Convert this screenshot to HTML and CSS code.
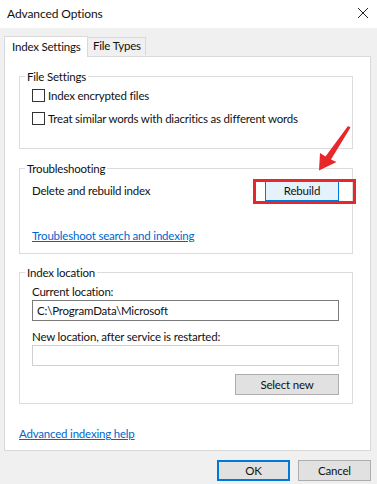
FILE: index.html
```html
<!DOCTYPE html>
<html>
<head>
<meta charset="utf-8">
<link rel="stylesheet" href="styles.css">
</head>
<body>
<div class="window">
  <div class="titlebar">
    <span class="title">Advanced Options</span>
    <svg class="close" width="12" height="12" viewBox="0 0 12 12"><path d="M1 1L11 11M11 1L1 11" stroke="#222" stroke-width="1" fill="none"/></svg>
  </div>
  <div class="tabstrip">
    <div class="tab active">Index Settings</div>
    <div class="tab">File Types</div>
  </div>
  <div class="panel">
    <div class="group g1">
      <div class="group-title">File Settings</div>
      <label class="check first"><span class="box"></span>Index encrypted files</label>
      <label class="check second"><span class="box"></span>Treat similar words with diacritics as different words</label>
    </div>
    <div class="group g2">
      <div class="group-title">Troubleshooting</div>
      <div class="row">
        <span>Delete and rebuild index</span>
        <div class="btn hot">Rebuild</div>
        <div class="redbox"></div>
      </div>
      <a class="link trouble">Troubleshoot search and indexing</a>
    </div>
    <div class="group g3">
      <div class="group-title">Index location</div>
      <div class="lbl first">Current location:</div>
      <div class="input dark">C:\ProgramData\Microsoft</div>
      <div class="lbl">New location, after service is restarted:</div>
      <div class="input light"></div>
      <div class="right"><div class="btn sel">Select new</div></div>
    </div>
    <a class="link help">Advanced indexing help</a>
    <svg class="arrow" width="40" height="52" viewBox="0 0 40 52"><polygon points="33,4 35.5,5.5 16,37.5 21.5,40 4,48.5 5,31 10.5,34.5" fill="#e8272b"/></svg>
  </div>
  <div class="footer">
    <div class="btn dflt">OK</div>
    <div class="btn">Cancel</div>
  </div>
</div>
</body>
</html>
```
FILE: styles.css
```css
* { box-sizing: border-box; }
html, body { margin: 0; padding: 0; }
body {
  font-family: Lato, "Noto Sans", "DejaVu Sans", sans-serif;
  font-size: 11.5px;
  letter-spacing: -0.2px;
  color: #111;
}
.window {
  position: relative;
  width: 377px;
  height: 484px;
  background: #f0f0f0;
  overflow: hidden;
}
.titlebar {
  height: 28px;
  background: #fff;
  display: flex;
  align-items: center;
  justify-content: space-between;
  padding: 0 8px 2px 7px;
}
.title { line-height: 15px; font-size: 12px; letter-spacing: -0.1px; }
.tabstrip {
  display: flex;
  align-items: flex-end;
  padding: 7px 0 0 4px;
  height: 28px;
  position: relative;
  z-index: 2;
}
.tab {
  height: 18px;
  line-height: 16px;
  padding: 0 4px 0 5px;
  border: 1px solid #d9d9d9;
  border-bottom: none;
  border-left: none;
  background: #f0f0f0;
  margin-bottom: 1px;
}
.tab.active {
  width: 84px;
  height: 21px;
  line-height: 19px;
  background: #fff;
  border-left: 1px solid #d9d9d9;
  padding: 0 0 0 7px;
  margin-bottom: -1px;
}
.panel {
  position: relative;
  margin: 0 6px 0 4px;
  height: 395px;
  background: #fff;
  border: 1px solid #d9d9d9;
  padding: 0 17px 0 14px;
  display: flex;
  flex-direction: column;
}
.group {
  border: 1px solid #dcdcdc;
  padding: 0 13px 0 12px;
  display: flex;
  flex-direction: column;
}
.g1 { margin-top: 19px; height: 73px; }
.g2 { margin-top: 19px; height: 86px; }
.g3 { margin-top: 18px; height: 132px; }
.group-title {
  margin: -8px 0 0 -7px;
  padding: 0 2px;
  background: #fff;
  width: max-content;
  line-height: 15px;
}
.check {
  display: flex;
  align-items: center;
  line-height: 15px;
  white-space: nowrap;
}
.check.first { margin-top: 3px; height: 16px; }
.check.second { margin-top: 7px; height: 16px; }
.box {
  width: 13px;
  height: 13px;
  border: 1px solid #333;
  background: #fff;
  margin-right: 3px;
  flex: none;
}
.row {
  position: relative;
  margin-top: 4px;
  height: 21px;
  display: flex;
  align-items: center;
  justify-content: space-between;
  line-height: 15px;
}
.btn {
  width: 73px;
  height: 21px;
  border: 1px solid #adadad;
  background: #e1e1e1;
  display: flex;
  align-items: center;
  justify-content: center;
  line-height: 15px;
}
.btn.hot {
  width: 74px;
  background: #e5f1fb;
  border-color: #0078d7;
}
.redbox {
  position: absolute;
  right: -17px;
  top: -1px;
  width: 103px;
  height: 25px;
  border: 3px solid #e8272b;
}
.link {
  color: #0066cc;
  text-decoration: underline;
  line-height: 15px;
  width: max-content;
}
.trouble { margin-top: 27px; }
.help { margin-top: 22px; }
.lbl { line-height: 15px; margin-top: 8px; }
.lbl.first { margin-top: 4px; }
.input {
  height: 21px;
  margin-top: 1px;
  border: 1px solid #7a7a7a;
  background: #fff;
  padding: 0 4px;
  line-height: 19px;
}
.input.light { border-color: #d0d0d0; }
.right { display: flex; justify-content: flex-end; margin-top: 8px; }
.btn.sel { width: 104px; }
.arrow {
  position: absolute;
  left: 310px;
  top: 65px;
}
.footer {
  display: flex;
  justify-content: flex-end;
  gap: 8px;
  padding: 9px 6px 0 0;
}
.btn.dflt { border: 2px solid #0078d7; }
```
